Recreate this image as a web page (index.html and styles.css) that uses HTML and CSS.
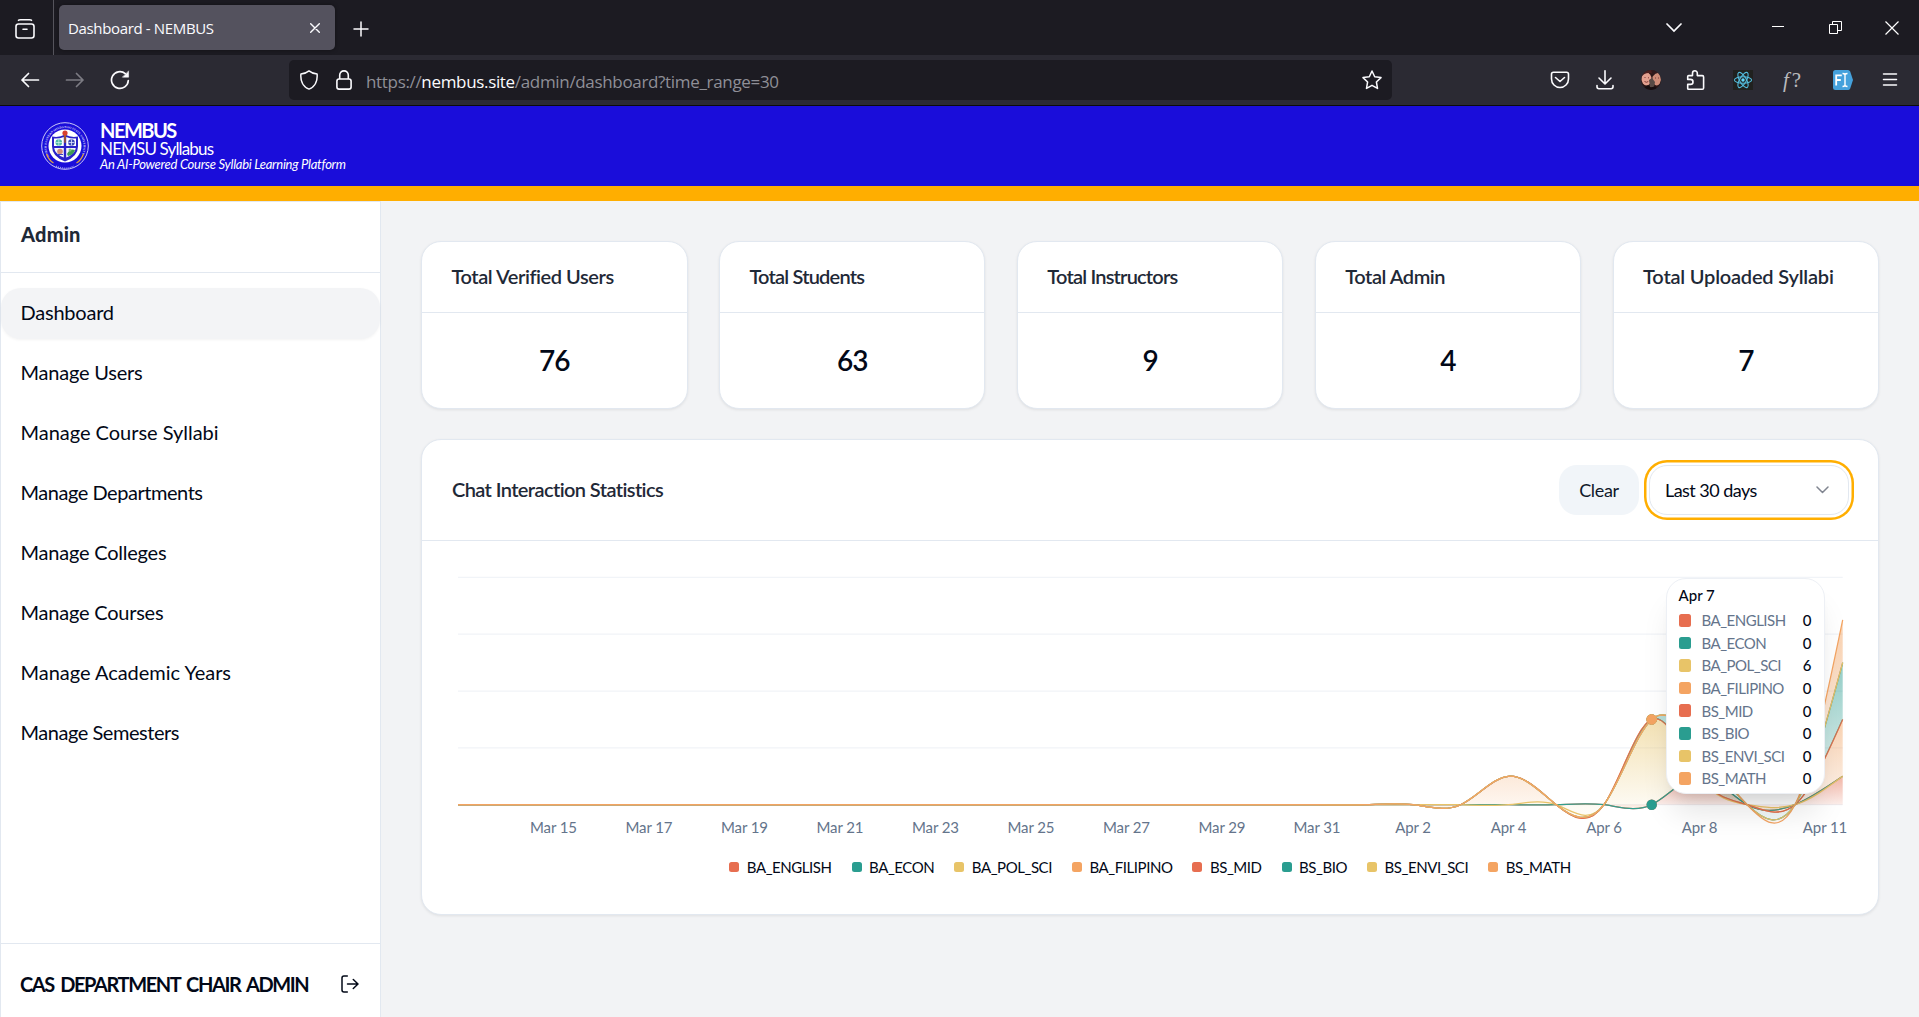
FILE: index.html
```html
<!DOCTYPE html>
<html lang="en">
<head>
<meta charset="utf-8">
<title>Dashboard - NEMBUS</title>
<link rel="stylesheet" href="styles.css">
</head>
<body>
<div class="tabbar">
  <div class="tab-view">
    <svg width="20" height="20" viewBox="0 0 20 20" fill="none" stroke="#fbfbfe" stroke-width="1.6" stroke-linecap="round"><rect x="1" y="5" width="18" height="14" rx="2.5"/><path d="M3.500 1.300Q4 .8 5.500.8h9q1.500 0 2 .5M8 10.200h4"/></svg>
  </div>
  <div class="tab">
    <span>Dashboard - NEMBUS</span>
    <svg width="10" height="10" viewBox="0 0 10 10" stroke="#fbfbfe" stroke-width="1.400" stroke-linecap="round"><path d="M.7.7l8.600 8.600M9.300.7L.7 9.300"/></svg>
  </div>
  <svg class="new-tab" width="16" height="16" viewBox="0 0 16 16" stroke="#fbfbfe" stroke-width="1.500" stroke-linecap="round"><path d="M8 1v14M1 8h14"/></svg>
  <div class="window-controls">
    <svg width="16" height="10" viewBox="0 0 16 10" fill="none" stroke="#fbfbfe" stroke-width="1.700" stroke-linecap="round"><path d="M1 1l7 7 7-7"/></svg>
    <svg width="12" height="12" viewBox="0 0 12 12" stroke="#fff"><path d="M0 4.500h12"/></svg>
    <svg width="13" height="13" viewBox="0 0 13 13" fill="none" stroke="#fff"><path d="M.5 3.500h8v9h-8zM3.500 3.500v-3h9v9h-4"/></svg>
    <svg width="14" height="14" viewBox="0 0 14 14" stroke="#fff" stroke-width="1.200"><path d="M.5.5l13 13M13.500.5l-13 13"/></svg>
  </div>
</div>

<div class="toolbar">
  <div class="nav-buttons">
    <svg width="20" height="20" viewBox="0 0 20 20" fill="none" stroke="#fbfbfe" stroke-width="1.700" stroke-linecap="round" stroke-linejoin="round"><path d="M18.500 10H2M8.500 3.500L2 10l6.500 6.500"/></svg>
    <svg width="20" height="20" viewBox="0 0 20 20" fill="none" stroke="#7c7b83" stroke-width="1.700" stroke-linecap="round" stroke-linejoin="round"><path d="M1.500 10H18M11.500 3.500L18 10l-6.500 6.500"/></svg>
    <svg width="20" height="20" viewBox="0 0 20 20" fill="none" stroke="#fbfbfe" stroke-width="1.700" stroke-linecap="round"><path d="M18.300 10.500A8.400 8.400 0 1 1 15.300 3.600"/><path d="M18.600 1.200v6h-6z" fill="#fbfbfe" stroke-width=".5"/></svg>
  </div>
  <div class="urlbar">
    <svg width="20" height="20" viewBox="0 0 20 20" fill="none" stroke="#fbfbfe" stroke-width="1.500" stroke-linejoin="round"><path d="M10 .9c2.200 1.800 5 2.900 8.100 3.200.5 5.900-1.500 12.600-8.100 15C3.400 16.700 1.400 10 1.900 4.100 5 3.800 7.800 2.700 10 .9z"/></svg>
    <svg width="16" height="20" viewBox="0 0 16 20" fill="none" stroke="#fbfbfe" stroke-width="1.600"><rect x=".9" y="9" width="14.200" height="10.100" rx="2.200"/><path d="M3.700 9V5.200a4.300 4.300 0 0 1 8.600 0V9"/></svg>
    <span class="url">https://<b>nembus.site</b>/admin/dashboard?time_range=30</span>
    <svg class="star" width="20" height="20" viewBox="0 0 20 20" fill="none" stroke="#fbfbfe" stroke-width="1.500" stroke-linejoin="round"><path d="M10 1l2.700 5.800 6.300.8-4.600 4.400 1.100 6.400L10 15.300l-5.500 3.100 1.100-6.400L1 7.600l6.300-.8z"/></svg>
  </div>
  <div class="extensions">
    <svg width="20" height="20" viewBox="0 0 20 20" fill="none" stroke="#fbfbfe" stroke-width="1.600" stroke-linecap="round" stroke-linejoin="round"><path d="M3.500 2.300h13q2 0 2 2V9a8.500 8.500 0 0 1-17 0V4.300q0-2 2-2zM5.500 7.500l4.500 4 4.500-4"/></svg>
    <svg width="20" height="20" viewBox="0 0 20 20" fill="none" stroke="#fbfbfe" stroke-width="1.600" stroke-linecap="round" stroke-linejoin="round"><path d="M10 .8v13M4 8l6 6 6-6"/><path d="M2 15.500v1.300q0 1.900 1.900 1.900h12.200q1.900 0 1.900-1.900v-1.300"/></svg>
    <svg width="20" height="20" viewBox="0 0 20 20"><clipPath id="avatar"><circle cx="10" cy="10" r="10"/></clipPath><g clip-path="url(#avatar)"><path fill="#2a1717" d="M0 0h20v20H0z"/><ellipse cx="5.500" cy="9" rx="5" ry="6.500" fill="#e3a08f"/><path d="M0 0h12v4Q5 1 0 7z" fill="#4a1f1f"/><ellipse cx="15.700" cy="9" rx="4.300" ry="6.500" fill="#cf8d78"/><path d="M10 0h10v4q-4-3-8 2z" fill="#301a1c"/><path d="M8 10l3-2 3 4-1 5H9z" fill="#584a45"/><path d="M2 20q4-8 8-2 4-4 7 2z" fill="#160e10"/><path d="M3.500 11.500q2 1.500 3.800 0M3.500 7.500h1M7 7.800h1M14 8h1M17 8h1" stroke="#803b38" fill="none"/></g></svg>
    <svg width="20" height="20" viewBox="0 0 20 20" fill="none" stroke="#fbfbfe" stroke-width="1.600" stroke-linejoin="round"><path d="M2.500 19.200q-.8 0-.8-.8v-4h2.800a2.500 2.500 0 0 0 0-5H1.700V6.600q0-1 1-1h3.800V3.200a2.400 2.400 0 0 1 4.800 0v2.400h5q1.300 0 1.300 1.300v11q0 1.300-1.300 1.300z"/></svg>
    <svg class="react" width="20" height="20" viewBox="0 0 20 20"><path fill="#20211f" d="M0 0h20v20H0z"/><g fill="none" stroke="#53bcdc" stroke-width="1.100"><ellipse cx="10" cy="10" rx="8.600" ry="3.300"/><ellipse cx="10" cy="10" rx="8.600" ry="3.300" transform="rotate(60 10 10)"/><ellipse cx="10" cy="10" rx="8.600" ry="3.300" transform="rotate(120 10 10)"/></g><circle cx="10" cy="10" r="1.700" fill="#61dafb"/></svg>
    <span class="whatfont"><i>f</i>?</span>
    <svg class="fill-tool" width="20" height="20" viewBox="0 0 20 20"><path fill="#45a1dc" d="M2.500 0H15q1.500 0 2.200 1.500L20 10l-2.800 8.500Q16.500 20 15 20H2.500Q0 20 0 17.500v-15Q0 0 2.500 0z"/><path d="M3.200 15.500V5.300h5.600M3.200 10h4.600" fill="none" stroke="#fff" stroke-width="1.800"/><path d="M9.500 3.500q1.700 0 2.500 1 .8-1 2.500-1M12 4.500v11M9.500 16.500q1.700 0 2.500-1 .8 1 2.500 1" fill="none" stroke="#fff" stroke-width="1.400"/></svg>
    <svg class="app-menu" width="20" height="20" viewBox="0 0 20 20" stroke="#fbfbfe" stroke-width="1.500" stroke-linecap="round"><path d="M3.500 4h13M3.500 9.500h13M3.500 15h13"/></svg>
  </div>
</div>

<header class="site-header">
  <svg class="seal" width="48" height="48" viewBox="0 0 48 48">
    <circle cx="24" cy="24" r="23.300" fill="#1a0dda" stroke="#c9c6f7" stroke-width="1"/>
    <circle cx="24" cy="24" r="16.500" fill="#fff"/>
    <path id="ring" d="M9.500 36A18.500 18.500 0 1 1 38.500 36" fill="none"/>
    <text class="seal-text"><textPath href="#ring" startOffset="2" textLength="76" lengthAdjust="spacingAndGlyphs">NORTH EASTERN MINDANAO STATE UNIVERSITY</textPath></text>
    <path d="M5.500 32q2.500 6.500 7 9M42.500 32q-2.500 6.500-7 9" fill="none" stroke="#e0a33c" stroke-width="1.300"/>
    <path d="M15 44.200q9 4 18 0" fill="none" stroke="#9d98f0" stroke-width="1.500" stroke-dasharray="1 1"/>
    <path d="M11 14.500q7 1.500 13-2 6 3.500 13 2v10q0 10-13 15-13-5-13-15z" fill="#2a22c9"/>
    <path d="M13 16.500q5 .5 9.800-1.500V24H13zM25.200 15q4.800 2 9.800 1.500V24h-9.800z" fill="#fff"/>
    <path d="M13.200 26h9.600v9.500q-9-3.500-9.600-9.500zM25.200 26h9.600q-.6 6-9.600 9.500z" fill="#f4f4fb"/>
    <path d="M24 13v24" stroke="#2a22c9" stroke-width="1.600"/>
    <path d="M22.800 13h2.400l-.6 8h-1.200z" fill="#a3582f"/><circle cx="24" cy="11" r="2.600" fill="#d8402f"/>
    <circle cx="17.800" cy="20.500" r="3.300" fill="#4bb9a8"/><path d="M14.500 20.500h6.600M17.800 17v7" stroke="#d5f3ec" stroke-width=".7"/>
    <circle cx="30.500" cy="20.500" r="3.300" fill="#3c4bb8"/><path d="M27.500 20.500h6M30.500 17.500v6" stroke="#dfe2ff" stroke-width=".8"/>
    <circle cx="19" cy="29.500" r="2.800" fill="#cf8a7a"/><path d="M16 32.500h6" stroke="#3a3ec9"/>
    <path d="M26 32q3-6 8-4-1 5-7 6z" fill="#3f9a56"/><circle cx="29" cy="28" r="1.500" fill="#7fc27d"/>
  </svg>
  <div class="brand">
    <strong>NEMBUS</strong>
    <span>NEMSU Syllabus</span>
    <em>An AI-Powered Course Syllabi Learning Platform</em>
  </div>
</header>

<div class="layout">
  <aside class="sidebar">
    <h2>Admin</h2>
    <nav>
      <a class="active">Dashboard</a>
      <a>Manage Users</a>
      <a class="loose">Manage Course Syllabi</a>
      <a class="tight">Manage Departments</a>
      <a>Manage Colleges</a>
      <a>Manage Courses</a>
      <a class="loose">Manage Academic Years</a>
      <a class="tight">Manage Semesters</a>
    </nav>
    <footer>
      <span>CAS DEPARTMENT CHAIR ADMIN</span>
      <svg width="18" height="18" viewBox="0 0 18 18" fill="none" stroke="#020817" stroke-width="1.500" stroke-linecap="round" stroke-linejoin="round"><path d="M6.300 1H3Q1 1 1 3v12q0 2 2 2h3.300M6.500 9h10.300M12.300 4.500L17 9l-4.700 4.500"/></svg>
    </footer>
  </aside>

  <main>
    <section class="stats">
      <article class="card"><h3>Total Verified Users</h3><p>76</p></article>
      <article class="card narrow-text"><h3>Total Students</h3><p>63</p></article>
      <article class="card narrow-text"><h3>Total Instructors</h3><p>9</p></article>
      <article class="card"><h3>Total Admin</h3><p>4</p></article>
      <article class="card wide-text"><h3>Total Uploaded Syllabi</h3><p>7</p></article>
    </section>

    <section class="card chart-card">
      <div class="chart-head">
        <h3>Chat Interaction Statistics</h3>
        <button class="clear">Clear</button>
        <button class="range">Last 30 days
          <svg width="13" height="8" viewBox="0 0 13 8" fill="none" stroke="#808590" stroke-width="1.500" stroke-linecap="round" stroke-linejoin="round"><path d="M1 1l5.500 5.500L12 1"/></svg>
        </button>
      </div>
      <div class="chart">
        <svg id="plot" class="plot" width="1456" height="300" viewBox="422 541 1456 300">
          <defs>
            <linearGradient id="fill-red" x1="0" y1="0" x2="0" y2="1"><stop offset=".05" stop-color="#e76e50" stop-opacity=".8"/><stop offset=".95" stop-color="#e76e50" stop-opacity=".1"/></linearGradient>
            <linearGradient id="fill-teal" x1="0" y1="0" x2="0" y2="1"><stop offset=".05" stop-color="#2a9d90" stop-opacity=".8"/><stop offset=".95" stop-color="#2a9d90" stop-opacity=".1"/></linearGradient>
            <linearGradient id="fill-gold" x1="0" y1="0" x2="0" y2="1"><stop offset=".05" stop-color="#e8c468" stop-opacity=".8"/><stop offset=".95" stop-color="#e8c468" stop-opacity=".1"/></linearGradient>
            <linearGradient id="fill-orange" x1="0" y1="0" x2="0" y2="1"><stop offset=".05" stop-color="#f4a462" stop-opacity=".8"/><stop offset=".95" stop-color="#f4a462" stop-opacity=".1"/></linearGradient>
          </defs>
          <path class="grid" d="M458 577.300H1842.700M458 634.200H1842.700M458 691H1842.700M458 747.800H1842.700M458 804.700H1842.700"/>
          <g id="areas"></g>
          <g class="ticks">
            <text x="553.500" y="833">Mar 15</text><text x="649" y="833">Mar 17</text><text x="744.500" y="833">Mar 19</text><text x="840" y="833">Mar 21</text><text x="935.500" y="833">Mar 23</text><text x="1031" y="833">Mar 25</text><text x="1126.500" y="833">Mar 27</text><text x="1222" y="833">Mar 29</text><text x="1317" y="833">Mar 31</text><text x="1413" y="833">Apr 2</text><text x="1508.500" y="833">Apr 4</text><text x="1604" y="833">Apr 6</text><text x="1699.500" y="833">Apr 8</text><text x="1825" y="833">Apr 11</text>
          </g>
        </svg>
        <ul class="legend">
          <li class="red">BA_ENGLISH</li><li class="teal">BA_ECON</li><li class="gold">BA_POL_SCI</li><li class="orange">BA_FILIPINO</li><li class="red">BS_MID</li><li class="teal">BS_BIO</li><li class="gold">BS_ENVI_SCI</li><li class="orange">BS_MATH</li>
        </ul>
        <div class="tooltip">
          <h4>Apr 7</h4>
          <ul>
            <li class="red">BA_ENGLISH<b>0</b></li>
            <li class="teal">BA_ECON<b>0</b></li>
            <li class="gold">BA_POL_SCI<b>6</b></li>
            <li class="orange">BA_FILIPINO<b>0</b></li>
            <li class="red">BS_MID<b>0</b></li>
            <li class="teal">BS_BIO<b>0</b></li>
            <li class="gold">BS_ENVI_SCI<b>0</b></li>
            <li class="orange">BS_MATH<b>0</b></li>
          </ul>
        </div>
      </div>
    </section>
  </main>
</div>
<script src="chart.js"></script>
</body>
</html>
```
FILE: chart.js
```js
// Stacked area chart: 30 days, eight programs, natural cubic interpolation.
const DAYS = 30, LEFT = 458, STEP = 1384.7 / 29, BASE = 804.7, UNIT = 14.21;
const APR = day => DAYS - 12 + day;
const series = [
  ["red",    "#e76e50", { 8: 2, 11: 2 }],
  ["teal",   "#2a9d90", {}],
  ["gold",   "#e8c468", { 7: 6 }],
  ["orange", "#f4a462", { 4: 2, 11: 4 }],
  ["red",    "#e76e50", {}],
  ["teal",   "#2a9d90", { 8: 2, 11: 4 }],
  ["gold",   "#e8c468", {}],
  ["orange", "#f4a462", { 11: 3 }]
];

function controls(v) {
  const n = v.length - 1, a = [0], b = [2], r = [v[0] + 2 * v[1]];
  for (let i = 1; i < n - 1; i++) { a[i] = 1; b[i] = 4; r[i] = 4 * v[i] + 2 * v[i + 1]; }
  a[n - 1] = 2; b[n - 1] = 7; r[n - 1] = 8 * v[n - 1] + v[n];
  for (let i = 1; i < n; i++) { const m = a[i] / b[i - 1]; b[i] -= m; r[i] -= m * r[i - 1]; }
  const p = []; p[n - 1] = r[n - 1] / b[n - 1];
  for (let i = n - 2; i >= 0; i--) p[i] = (r[i] - p[i + 1]) / b[i];
  const q = [];
  for (let i = 0; i < n - 1; i++) q[i] = 2 * v[i + 1] - p[i + 1];
  q[n - 1] = (v[n] + p[n - 1]) / 2;
  return [p, q];
}

function curve(values, reverse) {
  const x = i => (LEFT + i * STEP).toFixed(2);
  const y = v => (BASE - v * UNIT).toFixed(2);
  const [p, q] = controls(values);
  const n = values.length - 1;
  let d = reverse ? `${x(n)},${y(values[n])}` : `${x(0)},${y(values[0])}`;
  for (let k = 0; k < n; k++) {
    const i = reverse ? n - 1 - k : k;
    const c1 = `${x(i + 1 / 3)},${y(p[i])}`, c2 = `${x(i + 2 / 3)},${y(q[i])}`;
    d += reverse ? `C${c2} ${c1} ${x(i)},${y(values[i])}` : `C${c1} ${c2} ${x(i + 1)},${y(values[i + 1])}`;
  }
  return d;
}

let below = Array(DAYS).fill(0), shapes = "", dots = "";
for (const [name, color, data] of series) {
  const top = below.slice();
  for (const day in data) top[APR(+day)] += data[day];
  shapes += `<path class="area" fill="url(#fill-${name})" d="M${curve(top)}L${curve(below, true)}Z"/>`;
  shapes += `<path class="line" stroke="${color}" d="M${curve(top)}"/>`;
  dots += `<circle cx="${LEFT + APR(7) * STEP}" cy="${BASE - top[APR(7)] * UNIT}" r="5.2" fill="${color}"/>`;
  below = top;
}
document.getElementById("areas").innerHTML = shapes + dots;
```
FILE: styles.css
```css
* { box-sizing: border-box; }
body { margin: 0; height: 1017px; display: flex; flex-direction: column; overflow: hidden; background: #f2f3f5; color: #020817; font-family: Lato, "Liberation Sans", sans-serif; font-size: 20px; }
h2, h3, h4, p, ul { margin: 0; padding: 0; }
ul { list-style: none; }
svg { display: block; flex: none; }
button { border: 0; font: inherit; color: inherit; }

.tabbar { height: 55px; flex: none; background: #1c1b22; display: flex; align-items: center; font-family: "Open Sans", sans-serif; }
.tab-view { width: 54px; height: 55px; border-right: 1px solid #55545c; display: flex; align-items: center; padding: 2px 0 0 15px; }
.tab { width: 276px; height: 45px; margin-left: 5px; padding: 0 15px 0 9px; border-radius: 5px; background: #54525e; box-shadow: 0 0 4px #0006; display: flex; align-items: center; justify-content: space-between; color: #fbfbfe; font-size: 15px; letter-spacing: -.35px; }
.new-tab { margin: 2px 0 0 18px; }
.window-controls { margin-left: auto; padding-right: 20px; display: flex; align-items: center; }
.window-controls svg:nth-child(2) { margin-left: 90px; }
.window-controls svg:nth-child(3) { margin-left: 45px; }
.window-controls svg:nth-child(4) { margin-left: 43px; }

.toolbar { height: 51px; flex: none; background: #2b2a33; border-bottom: 1px solid #0c0c0d; display: flex; align-items: center; }
.nav-buttons { width: 289px; padding-left: 20px; display: flex; gap: 25px; }
.urlbar { width: 1103px; height: 40px; padding: 0 10px; border-radius: 5px; background: #1c1b22; display: flex; align-items: center; gap: 17px; }
.url { color: #8f8f97; font: 17px "Open Sans", sans-serif; letter-spacing: -.33px; padding-top: 2px; margin-left: -3px; }
.url b { color: #fbfbfe; font-weight: 400; }
.star { margin-left: auto; }
.extensions { margin-left: auto; padding-right: 19px; display: flex; align-items: center; gap: 25.500px; }
.react, .app-menu { margin-left: 1.500px; }
.fill-tool { margin-left: 4.500px; }
.whatfont { width: 20px; margin-left: 4.500px; color: #b9b9bd; font: 21px/20px "Liberation Serif", serif; white-space: nowrap; }
.whatfont i { padding-right: 3px; }

.site-header { height: 95px; flex: none; background: #1a0dda; border-bottom: 15px solid #ffae00; display: flex; align-items: center; padding-left: 41px; gap: 11px; color: #fff; }
.seal-text { font: 700 3px "Liberation Serif", serif; fill: #d5d3fb; }
.brand { display: flex; flex-direction: column; white-space: nowrap; }
.brand strong { font-size: 20px; line-height: 19px; letter-spacing: -1.500px; font-weight: 700; }
.brand span { font-size: 17px; line-height: 17px; letter-spacing: -.85px; }
.brand em { font-size: 13px; line-height: 14px; letter-spacing: -.26px; }

.layout { flex: 1; min-height: 0; display: flex; }
.sidebar { width: 381px; flex: none; background: #fff; border: 1px solid #e2e8f0; border-bottom: 0; display: flex; flex-direction: column; }
.sidebar h2 { height: 71px; padding: 20px; border-bottom: 1px solid #e2e8f0; color: #1f2937; font-size: 20px; line-height: 24px; font-weight: 900; letter-spacing: .2px; }
.sidebar nav { flex: 1; padding-top: 15px; display: flex; flex-direction: column; gap: 9px; }
.sidebar a { height: 51px; padding-left: 19.500px; border-radius: 20px; line-height: 48px; letter-spacing: -.22px; }
.sidebar .active { background: #f3f4f6; box-shadow: 0 1px 3px #0000000d; }
.sidebar .loose { letter-spacing: -.02px; }
.sidebar .tight { letter-spacing: -.46px; }
.sidebar footer { height: 74px; padding: 6px 21px 0 19px; border-top: 1px solid #e2e8f0; display: flex; align-items: center; justify-content: space-between; font-weight: 700; letter-spacing: -1.400px; word-spacing: 2.800px; white-space: nowrap; }

main { flex: 1; padding: 40px 39px 0 40px; }
.stats { display: grid; grid-template-columns: repeat(5, 266.500px); gap: 31.400px; }
.card { background: #fff; border: 1px solid #e2e8f0; border-radius: 20px; box-shadow: 0 1px 3px #00000014; }
.card h3 { color: #1f2937; font-size: 20px; font-weight: 600; letter-spacing: -.44px; }
.stats .card { height: 168px; }
.stats h3 { height: 71px; padding-left: 29.500px; line-height: 69px; border-bottom: 1px solid #e2e8f0; white-space: nowrap; }
.stats .wide-text h3 { letter-spacing: -.2px; }
.stats .narrow-text h3 { letter-spacing: -.8px; }
.stats p { text-align: center; font-size: 28px; font-weight: 600; line-height: 94px; letter-spacing: -1px; }

.chart-card { width: 1458px; margin-top: 30px; height: 476px; }
.chart-head { height: 101px; padding: 0 29px 0 30px; border-bottom: 1px solid #e2e8f0; display: flex; align-items: center; gap: 10px; }
.card .chart-head h3 { flex: 1; letter-spacing: -.6px; padding-bottom: 2px; }
.clear { width: 80px; height: 50px; border-radius: 18px; background: #f1f5f9; font-size: 18px; letter-spacing: -.32px; color: #0f172a; }
.range { width: 200px; height: 50px; padding: 0 19px 0 15px; border: 1px solid #e2e8f0; border-radius: 18px; background: #fff; box-shadow: 0 0 0 2.500px #fff, 0 0 0 5px #ffae00; display: flex; align-items: center; justify-content: space-between; font-size: 18px; letter-spacing: -.54px; }
.chart { position: relative; }
.grid { stroke: #f1f4f8; stroke-width: 1.250; }
.area { fill-opacity: .6; }
.line { fill: none; stroke-width: 1.250; }
.ticks { font-size: 15px; letter-spacing: -.1px; fill: #64748b; text-anchor: middle; }
.legend { margin-top: 15px; display: flex; justify-content: center; gap: 20px; font-size: 15px; line-height: 22px; letter-spacing: -.44px; }
.legend li, .tooltip li { display: flex; align-items: center; white-space: nowrap; }
.legend li::before { content: ""; width: 10px; height: 10px; margin-right: 7.500px; border-radius: 2.500px; background: var(--c); }
.red { --c: #e76e50; }
.teal { --c: #2a9d90; }
.gold { --c: #e8c468; }
.orange { --c: #f4a462; }
.tooltip { position: absolute; left: 1243.500px; top: 37px; width: 159px; height: 216px; padding: 6px 12px 0; border: 1px solid #edf0f5; border-radius: 20px; background: #fff; box-shadow: 0 25px 31px -6px #0000001a, 0 10px 12px -7px #0000001a; font-size: 15px; letter-spacing: -.5px; }
.tooltip h4 { font-size: 15px; line-height: 21px; font-weight: 500; letter-spacing: 0; margin-bottom: 3px; }
.tooltip li { height: 22.600px; color: #64748b; }
.tooltip li::before { content: ""; width: 12.500px; height: 12.500px; margin-right: 10.500px; border-radius: 2.500px; background: var(--c); }
.tooltip b { margin-left: auto; color: #020817; font-weight: 500; letter-spacing: 0; }
```
